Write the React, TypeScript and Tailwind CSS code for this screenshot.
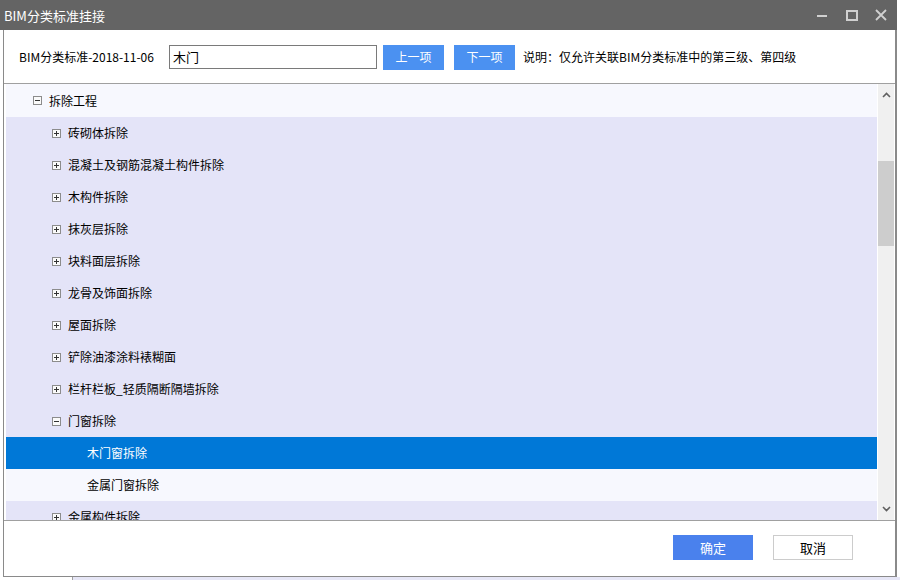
import React from 'react'

type Node = { label: string; level: 1 | 2 | 3; open?: boolean; leaf?: boolean; selected?: boolean }

const nodes: Node[] = [
  { label: '拆除工程', level: 1, open: true },
  { label: '砖砌体拆除', level: 2 },
  { label: '混凝土及钢筋混凝土构件拆除', level: 2 },
  { label: '木构件拆除', level: 2 },
  { label: '抹灰层拆除', level: 2 },
  { label: '块料面层拆除', level: 2 },
  { label: '龙骨及饰面拆除', level: 2 },
  { label: '屋面拆除', level: 2 },
  { label: '铲除油漆涂料裱糊面', level: 2 },
  { label: '栏杆栏板_轻质隔断隔墙拆除', level: 2 },
  { label: '门窗拆除', level: 2, open: true },
  { label: '木门窗拆除', level: 3, leaf: true, selected: true },
  { label: '金属门窗拆除', level: 3, leaf: true },
  { label: '金属构件拆除', level: 2 },
]

const font = { fontFamily: '"Noto Sans CJK SC", "Noto Sans", sans-serif' }

function ToggleBox({ open }: { open?: boolean }) {
  return (
    <svg width="9" height="9" viewBox="0 0 9 9" className="shrink-0">
      <rect x="0.5" y="0.5" width="8" height="8" fill="#fafafa" stroke="#8c8c8c" />
      <line x1="2" y1="4.5" x2="7" y2="4.5" stroke="#333" />
      {!open && <line x1="4.5" y1="2" x2="4.5" y2="7" stroke="#333" />}
    </svg>
  )
}

function TreeRow({ node, first }: { node: Node; first: boolean }) {
  const bg = node.selected ? 'bg-[#0078d7] text-white' : node.level === 2 ? 'bg-[#e4e4f8] text-black' : 'bg-[#f7f8fe] text-black'
  const pad = node.level === 1 ? 'pl-[27px]' : node.level === 2 ? 'pl-[46px]' : 'pl-[81px]'
  return (
    <div className={`flex items-center gap-[7px] shrink-0 text-[12px] ${first ? 'h-[33px]' : 'h-[32px]'} ${bg} ${pad}`}>
      {!node.leaf && <ToggleBox open={node.open} />}
      <span className="leading-none">{node.label}</span>
    </div>
  )
}

export default function App() {
  return (
    <div className="w-[900px] h-[580px] bg-white overflow-hidden flex flex-col" style={font}>
      <div className="flex h-[577px] shrink-0">
        {/* Dialog */}
        <div className="w-[897px] h-full flex flex-col">
          {/* Title bar */}
          <div className="h-[30px] bg-[#646464] flex items-center justify-between shrink-0">
            <span className="text-white text-[13px] pl-[4px] leading-none">BIM分类标准挂接</span>
            <div className="flex items-center h-full">
              <div className="w-[30px] h-full flex items-center justify-center">
                <div className="w-[10px] h-[2px] bg-[#d0d0d0] mt-[1px]" />
              </div>
              <div className="w-[30px] h-full flex items-center justify-center">
                <div className="w-[12px] h-[11px] border-2 border-[#d0d0d0]" />
              </div>
              <div className="w-[30px] h-full flex items-center justify-center pr-[2px]">
                <svg width="12" height="12" viewBox="0 0 12 12">
                  <path d="M1 1 L11 11 M11 1 L1 11" stroke="#d0d0d0" strokeWidth="1.8" />
                </svg>
              </div>
            </div>
          </div>

          <div className="flex-1 flex flex-col ml-[3px] border-l border-r-2 border-b border-[#8a8a8a]">
            {/* Toolbar */}
            <div className="h-[53px] shrink-0 flex items-center pl-[15px] pt-[1px] text-[12px] text-black">
              <span className="w-[150px] shrink-0 whitespace-nowrap">BIM分类标准-2018-11-06</span>
              <div className="w-[208px] h-[24px] border border-[#7a7a7a] flex items-center pl-[3px] text-[13px] bg-white">
                木门
              </div>
              <button className="ml-[6px] w-[61px] h-[25px] bg-[#4b91f1] text-white text-[12px]">上一项</button>
              <button className="ml-[10px] w-[61px] h-[25px] bg-[#4b91f1] text-white text-[12px]">下一项</button>
              <span className="ml-[8px] whitespace-nowrap">说明：仅允许关联BIM分类标准中的第三级、第四级</span>
            </div>

            {/* Tree panel */}
            <div className="h-[438px] shrink-0 border-y border-[#a0a0a0] flex pl-[2px]">
              <div className="flex-1 flex flex-col overflow-hidden pr-[1px]">
                {nodes.map((n, i) => (
                  <TreeRow key={n.label} node={n} first={i === 0} />
                ))}
              </div>
              <div className="w-[16px] bg-[#f0f0f0] flex flex-col items-center mr-[1px]">
                <div className="h-[20px] flex items-center justify-center mt-[1px]">
                  <svg width="9" height="6" viewBox="0 0 9 6">
                    <path d="M1 5 L4.5 1.5 L8 5" stroke="#606060" strokeWidth="1.6" fill="none" />
                  </svg>
                </div>
                <div className="mt-[56px] w-full h-[85px] bg-[#cdcdcd]" />
                <div className="flex-1" />
                <div className="h-[20px] flex items-center justify-center mb-[1px]">
                  <svg width="9" height="6" viewBox="0 0 9 6">
                    <path d="M1 1 L4.5 4.5 L8 1" stroke="#606060" strokeWidth="1.6" fill="none" />
                  </svg>
                </div>
              </div>
            </div>

            {/* Footer */}
            <div className="flex-1 flex items-start justify-end pt-[14px] pr-[42px] gap-[20px] text-[13px]">
              <button className="w-[80px] h-[25px] bg-[#4a81ed] text-white">确定</button>
              <button className="w-[80px] h-[25px] border border-[#cccccc] bg-white text-black">取消</button>
            </div>
          </div>
        </div>
        <div className="flex-1 bg-white" />
      </div>
      <div className="flex h-[3px]">
        <div className="w-[72px] bg-white" />
        <div className="flex-1 bg-[#e6e6f6] border-l border-[#a0a0a0]" />
      </div>
    </div>
  )
}
